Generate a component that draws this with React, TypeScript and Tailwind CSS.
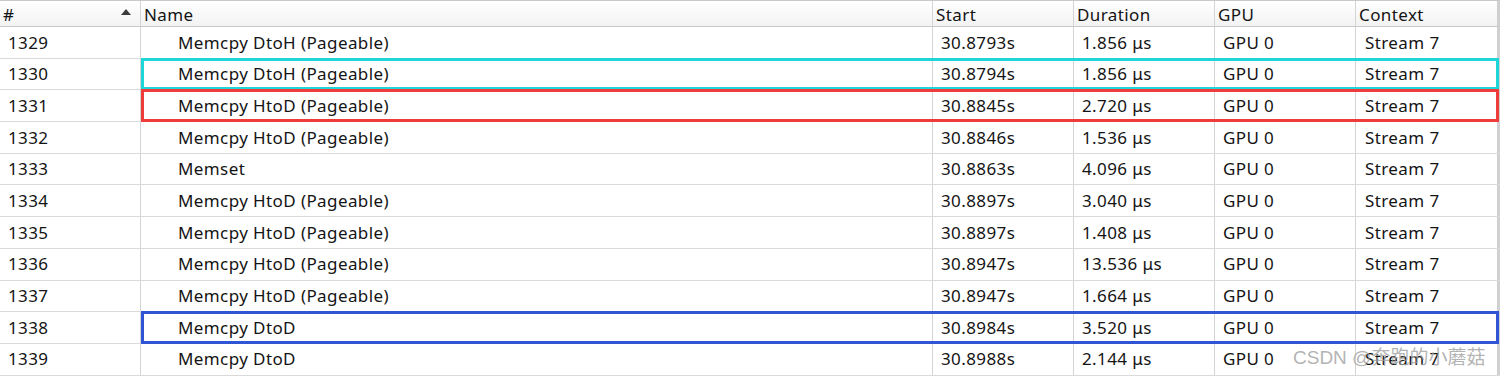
import React from 'react';

type Row = {
  id: number;
  name: string;
  start: string;
  duration: string;
  mark?: 'cyan' | 'red' | 'blue';
};

const rows: Row[] = [
  { id: 1329, name: 'Memcpy DtoH (Pageable)', start: '30.8793s', duration: '1.856 μs' },
  { id: 1330, name: 'Memcpy DtoH (Pageable)', start: '30.8794s', duration: '1.856 μs', mark: 'cyan' },
  { id: 1331, name: 'Memcpy HtoD (Pageable)', start: '30.8845s', duration: '2.720 μs', mark: 'red' },
  { id: 1332, name: 'Memcpy HtoD (Pageable)', start: '30.8846s', duration: '1.536 μs' },
  { id: 1333, name: 'Memset', start: '30.8863s', duration: '4.096 μs' },
  { id: 1334, name: 'Memcpy HtoD (Pageable)', start: '30.8897s', duration: '3.040 μs' },
  { id: 1335, name: 'Memcpy HtoD (Pageable)', start: '30.8897s', duration: '1.408 μs' },
  { id: 1336, name: 'Memcpy HtoD (Pageable)', start: '30.8947s', duration: '13.536 μs' },
  { id: 1337, name: 'Memcpy HtoD (Pageable)', start: '30.8947s', duration: '1.664 μs' },
  { id: 1338, name: 'Memcpy DtoD', start: '30.8984s', duration: '3.520 μs', mark: 'blue' },
  { id: 1339, name: 'Memcpy DtoD', start: '30.8988s', duration: '2.144 μs' },
];

const markClass = {
  cyan: 'border-[#1ed5d8]',
  red: 'border-[#ee3b3b]',
  blue: 'border-[#2f55d4]',
};

export default function App() {
  return (
    <div
      className="w-[1500px] h-[377px] bg-white overflow-hidden text-[17px] tracking-[0.4px] text-[#141414] relative"
      style={{ fontFamily: '"Noto Sans", "Noto Sans CJK SC", sans-serif' }}
    >
      {/* Header */}
      <div className="flex h-[27px] border-t border-b border-[#c9c9c9] bg-gradient-to-b from-white to-[#f3f3f3] leading-[28px]">
        <div className="w-[141px] flex-shrink-0 border-r border-[#d4d4d4] pl-[3px] pr-[8px] flex items-center justify-between">
          <span className="mt-[2px]">#</span>
          <svg width="12" height="8" viewBox="0 0 12 8" className="mb-[3px]">
            <polygon points="6,1 11,7 1,7" fill="#3c3c3c" />
          </svg>
        </div>
        <div className="w-[792px] flex-shrink-0 border-r border-[#d4d4d4] pl-[3px]">Name</div>
        <div className="w-[141px] flex-shrink-0 border-r border-[#d4d4d4] pl-[3px]">Start</div>
        <div className="w-[141px] flex-shrink-0 border-r border-[#d4d4d4] pl-[3px]">Duration</div>
        <div className="w-[141px] flex-shrink-0 border-r border-[#d4d4d4] pl-[3px]">GPU</div>
        <div className="flex-1 pl-[3px] border-r-[3px] border-[#d0d0d0]">Context</div>
      </div>

      {/* Rows */}
      {rows.map((r) => (
        <div key={r.id} className="flex h-[31.7px] border-b border-[#dadada] items-center">
          <div className="w-[141px] h-full flex-shrink-0 border-r border-[#d4d4d4] pl-[8px] flex items-center">
            {r.id}
          </div>
          <div className="flex-1 h-full flex relative">
            <div className="w-[792px] flex-shrink-0 border-r border-[#d4d4d4] pl-[37px] flex items-center">
              {r.name}
            </div>
            <div className="w-[141px] flex-shrink-0 border-r border-[#d4d4d4] pl-[8px] flex items-center">
              {r.start}
            </div>
            <div className="w-[141px] flex-shrink-0 border-r border-[#d4d4d4] pl-[8px] flex items-center">
              {r.duration}
            </div>
            <div className="w-[141px] flex-shrink-0 border-r border-[#d4d4d4] pl-[8px] flex items-center">
              GPU 0
            </div>
            <div className="flex-1 pl-[9px] flex items-center border-r-[3px] border-[#d0d0d0]">Stream 7</div>
            {r.mark && (
              <div
                className={`absolute left-0 right-[1px] top-[-1px] bottom-[-1px] border-[3px] ${markClass[r.mark]}`}
              />
            )}
          </div>
        </div>
      ))}

      {/* watermark */}
      <div
        className="absolute left-[1293px] top-[344px] whitespace-nowrap text-[19px] tracking-normal text-[#a0a0a0]/80"
        style={{ fontFamily: '"Liberation Sans", "Noto Sans CJK SC", sans-serif' }}
      >
        CSDN @奔跑的小蘑菇
      </div>
    </div>
  );
}
